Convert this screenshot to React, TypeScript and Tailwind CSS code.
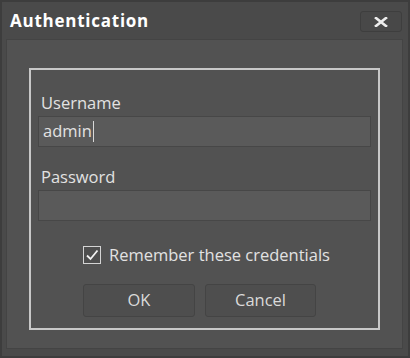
export default function App() {
  return (
    <div className="w-[410px] h-[358px] bg-[#4a4a4a] border-2 border-[#3d3d3d] flex flex-col font-['Open_Sans',sans-serif] text-[#e2e2e2]">
      {/* Title bar */}
      <div className="h-[37px] shrink-0 flex items-center justify-between pl-[8px] pr-[6px]">
        <span className="text-[17px] font-bold text-white tracking-[0.75px]">Authentication</span>
        <button className="w-[42px] h-[21px] mt-[2px] rounded-[3px] bg-[#484848] border border-[#3e3e3e] flex items-center justify-center">
          <svg width="14" height="10" viewBox="0 0 14 10">
            <path d="M2 1 L12 9 M12 1 L2 9" stroke="#ececec" strokeWidth="2.6" strokeLinecap="square" />
          </svg>
        </button>
      </div>

      {/* Content panel */}
      <div className="ml-[4px] mr-[5px] mb-[7px] flex-1 bg-[#525252] border border-[#444444] pt-[28px] pl-[22px] pr-[22px] pb-[17px]">
        <div className="h-[262px] border-2 border-[#c8c8c8] flex flex-col px-[7px]">
          <label className="mt-[23px] ml-[3px] text-[16.5px] leading-[20px]">Username</label>
          <div className="mt-[3px] h-[31px] bg-[#5a5a5a] border border-[#474747] flex items-center px-[4px] text-[16.5px]">
            <span>admin</span>
            <span className="w-px h-[21px] bg-[#d8d8d8] ml-[1px]" />
          </div>
          <label className="mt-[20px] ml-[3px] text-[16.5px] leading-[20px]">Password</label>
          <div className="mt-[3px] h-[31px] bg-[#5a5a5a] border border-[#474747]" />

          <div className="mt-[24px] ml-[45px] flex items-center gap-[8px] h-[20px]">
            <span className="w-[18px] h-[18px] border border-[#d4d4d4] bg-[#4e4e4e] flex items-center justify-center">
              <svg width="14" height="14" viewBox="0 0 14 14">
                <path d="M2 7.5 L5.5 11 L12.5 2.5" stroke="#f2f2f2" strokeWidth="1.8" fill="none" />
              </svg>
            </span>
            <span className="text-[16.5px] leading-[20px]">Remember these credentials</span>
          </div>

          <div className="mt-[19px] ml-[45px] flex gap-[10px]">
            <button className="w-[112px] h-[33px] rounded-[3px] bg-[#4e4e4e] border border-[#444444] text-[16.5px] text-[#dadada]">OK</button>
            <button className="w-[111px] h-[33px] rounded-[3px] bg-[#4e4e4e] border border-[#444444] text-[16.5px] text-[#dadada]">Cancel</button>
          </div>
        </div>
      </div>
    </div>
  );
}
